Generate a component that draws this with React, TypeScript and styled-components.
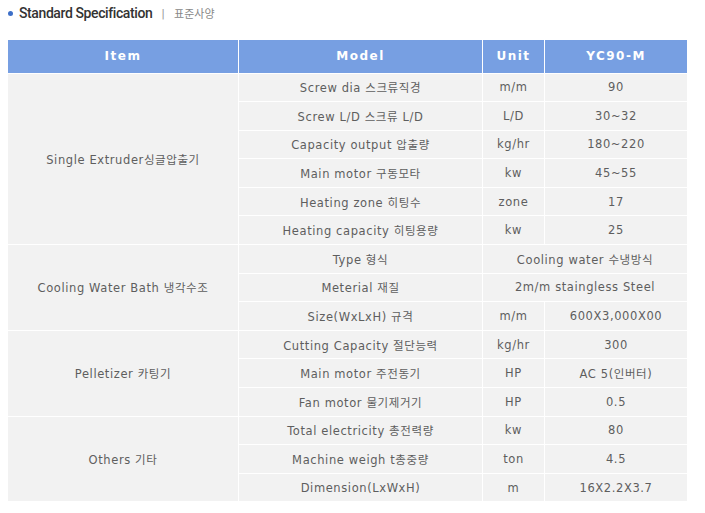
import React from 'react'
import styled, { createGlobalStyle } from 'styled-components'

const GlobalStyle = createGlobalStyle`
  body {
    margin: 0;
    background: #fff;
    font-family: "DejaVu Sans", "Noto Sans CJK KR", sans-serif;
  }
`

const Page = styled.div`
  padding: 3px 18px 0 8px;
`

const TitleBar = styled.div`
  display: flex;
  align-items: center;
  height: 20px;
  margin-bottom: 17px;
`

const Bullet = styled.span`
  width: 5px;
  height: 5px;
  border-radius: 50%;
  background: #3d6fc8;
  margin-right: 6px;
`

const Title = styled.span`
  font-family: Roboto, "Noto Sans CJK KR", sans-serif;
  font-size: 14px;
  font-weight: 500;
  letter-spacing: -0.4px;
  color: #333;
`

const Divider = styled.span`
  color: #999;
  font-size: 11px;
  margin: 0 9px;
`

const SubTitle = styled.span`
  font-family: "Noto Sans CJK KR", sans-serif;
  font-size: 11px;
  color: #888;
`

const Grid = styled.div`
  display: grid;
  grid-template-columns: 230px 243px 61px 142px;
  grid-template-rows: 32.5px;
  grid-auto-rows: 27.6px;
  gap: 1px;
  background: #fff;
  width: 679px;
`

const HeadCell = styled.div`
  display: flex;
  align-items: center;
  justify-content: center;
  background: #779fe2;
  color: #fff;
  font-size: 12px;
  font-weight: bold;
  letter-spacing: 1.5px;
`

const Cell = styled.div<{ $rows?: number; $cols?: number }>`
  display: flex;
  align-items: center;
  justify-content: center;
  background: #f2f2f2;
  color: #5e5e5e;
  font-size: 11.5px;
  letter-spacing: 0.6px;
  white-space: nowrap;
  grid-row: span ${({ $rows = 1 }) => $rows};
  grid-column: span ${({ $cols = 1 }) => $cols};
`

type Row = { model: string; unit?: string; value: string }
type Group = { name: string; rows: Row[] }

const groups: Group[] = [
  {
    name: 'Single Extruder싱글압출기',
    rows: [
      { model: 'Screw dia 스크류직경', unit: 'm/m', value: '90' },
      { model: 'Screw L/D 스크류 L/D', unit: 'L/D', value: '30~32' },
      { model: 'Capacity output 압출량', unit: 'kg/hr', value: '180~220' },
      { model: 'Main motor 구동모타', unit: 'kw', value: '45~55' },
      { model: 'Heating zone 히팅수', unit: 'zone', value: '17' },
      { model: 'Heating capacity 히팅용량', unit: 'kw', value: '25' },
    ],
  },
  {
    name: 'Cooling Water Bath 냉각수조',
    rows: [
      { model: 'Type 형식', value: 'Cooling water 수냉방식' },
      { model: 'Meterial 재질', value: '2m/m staingless Steel' },
      { model: 'Size(WxLxH) 규격', unit: 'm/m', value: '600X3,000X00' },
    ],
  },
  {
    name: 'Pelletizer 카팅기',
    rows: [
      { model: 'Cutting Capacity 절단능력', unit: 'kg/hr', value: '300' },
      { model: 'Main motor 주전동기', unit: 'HP', value: 'AC 5(인버터)' },
      { model: 'Fan motor 물기제거기', unit: 'HP', value: '0.5' },
    ],
  },
  {
    name: 'Others 기타',
    rows: [
      { model: 'Total electricity 총전력량', unit: 'kw', value: '80' },
      { model: 'Machine weigh t총중량', unit: 'ton', value: '4.5' },
      { model: 'Dimension(LxWxH)', unit: 'm', value: '16X2.2X3.7' },
    ],
  },
]

export default function App() {
  return (
    <Page>
      <GlobalStyle />
      <TitleBar>
        <Bullet />
        <Title>Standard Specification</Title>
        <Divider>|</Divider>
        <SubTitle>표준사양</SubTitle>
      </TitleBar>
      <Grid>
        <HeadCell>Item</HeadCell>
        <HeadCell>Model</HeadCell>
        <HeadCell>Unit</HeadCell>
        <HeadCell>YC90-M</HeadCell>
        {groups.map(g => (
          <React.Fragment key={g.name}>
            <Cell $rows={g.rows.length}>{g.name}</Cell>
            {g.rows.map(r => (
              <React.Fragment key={r.model}>
                <Cell>{r.model}</Cell>
                {r.unit ? (
                  <>
                    <Cell>{r.unit}</Cell>
                    <Cell>{r.value}</Cell>
                  </>
                ) : (
                  <Cell $cols={2}>{r.value}</Cell>
                )}
              </React.Fragment>
            ))}
          </React.Fragment>
        ))}
      </Grid>
    </Page>
  )
}
